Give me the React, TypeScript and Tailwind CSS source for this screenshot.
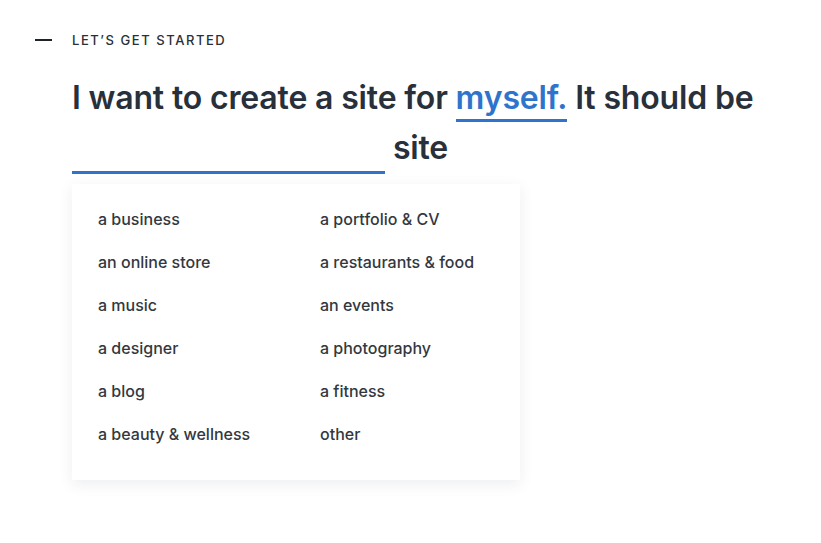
const options: [string, string][] = [
  ["a business", "a portfolio & CV"],
  ["an online store", "a restaurants & food"],
  ["a music", "an events"],
  ["a designer", "a photography"],
  ["a blog", "a fitness"],
  ["a beauty & wellness", "other"],
];

export default function App() {
  return (
    <div
      className="min-h-[543px] w-full bg-white pt-[33px] text-[#2b2f36]"
      style={{ fontFamily: "Inter, 'Noto Sans', sans-serif" }}
    >
      <div className="flex items-center">
        <span className="ml-[35px] h-[2px] w-[17px] bg-[#1f2329]" />
        <span className="ml-[20px] text-[13px] font-medium leading-[14px] tracking-[0.12em] text-[#2a2f36]">
          LET’S GET STARTED
        </span>
      </div>

      <div className="ml-[72px] mt-[26px] w-[720px]">
        <h1 className="text-[32px] font-semibold leading-[50px] tracking-[-0.005em] text-[#28303b]">
          I want to create a site for{" "}
          <span className="inline-block border-b-[3px] border-[#2f74cc] leading-[42px] text-[#2f74cc]">
            myself.
          </span>{" "}
          It should be{" "}
          <span className="inline-block h-[40px] w-[313px] border-b-[3px] border-[#2f74cc] align-[-15px]" />{" "}
          site
        </h1>

        <div className="mt-[10px] w-[448px] bg-white pb-[37px] pl-[26px] pt-[26px] shadow-[0_4px_14px_rgba(30,40,60,0.08)]">
          <div className="grid grid-cols-[222px_1fr] gap-y-[25px]">
            {options.flat().map((o) => (
              <div
                key={o}
                className="text-[16px] font-medium leading-[18px] text-[#333840]"
              >
                {o}
              </div>
            ))}
          </div>
        </div>
      </div>
    </div>
  );
}
